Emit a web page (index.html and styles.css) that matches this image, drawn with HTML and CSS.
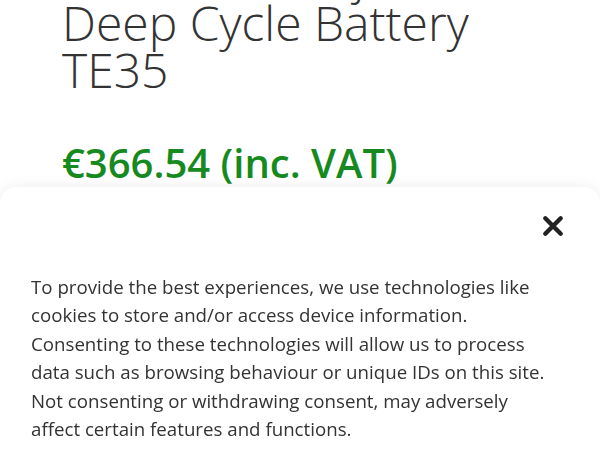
FILE: index.html
```html
<!DOCTYPE html>
<html lang="en">
<head>
    <meta charset="UTF-8">
    <meta name="viewport" content="width=device-width, initial-scale=1.0">
    <title>Trojan Deep Cycle Battery TE35</title>
    <link rel="stylesheet" href="styles.css">
</head>
<body>

    <!-- product summary -->
    <main class="product">
        <h1 class="product-title">6V 225Ah Trojan Deep Cycle Battery TE35</h1>
        <p class="price">€366.54 (inc. VAT)</p>
    </main>

    <!-- cookie consent sheet -->
    <div class="consent">
        <div class="consent-head">
            <button class="consent-close" aria-label="Close">
                <svg viewBox="0 0 20 20" width="22" height="22">
                    <path d="M3 3 L17 17 M17 3 L3 17" stroke="#222" stroke-width="4" stroke-linecap="round"/>
                </svg>
            </button>
        </div>
        <p class="consent-text">To provide the best experiences, we use technologies like cookies to store and/or access device information. Consenting to these technologies will allow us to process data such as browsing behaviour or unique IDs on this site. Not consenting or withdrawing consent, may adversely affect certain features and functions.</p>
    </div>

</body>
</html>
```

FILE: styles.css
```css
/* base */
body {
    font-family: 'Open Sans', 'Liberation Sans', sans-serif;
    margin: 0;
    padding: 0;
    height: 100vh;
    background: #fff;
    color: #333;
    overflow: hidden;
}

/* product */
.product {
    padding: 0 0 0 62px;
}

.product-title {
    max-width: 430px;
    margin: -48px 0 0;
    font-size: 48px;
    font-weight: 300;
    line-height: 47px;
    color: #333;
}

.price {
    margin: 45px 0 0;
    font-size: 40px;
    font-weight: 600;
    line-height: 50px;
    color: #168a1f;
}

/* cookie sheet */
.consent {
    position: fixed;
    left: 0;
    right: 0;
    top: 187px;
    bottom: -20px;
    background: #fff;
    border-radius: 16px 16px 0 0;
    box-shadow: 0 0 14px rgba(0, 0, 0, 0.08);
    padding: 28px 44px 0 31px;
}

.consent-head {
    display: flex;
    justify-content: flex-end;
    margin-right: -13px;
}

.consent-close {
    background: transparent;
    border: none;
    padding: 0;
    margin-right: 5px;
    width: 22px;
    height: 22px;
    cursor: pointer;
}

.consent-text {
    margin: 36px 0 0;
    font-size: 18.7px;
    line-height: 28.4px;
    color: #333;
}
```
